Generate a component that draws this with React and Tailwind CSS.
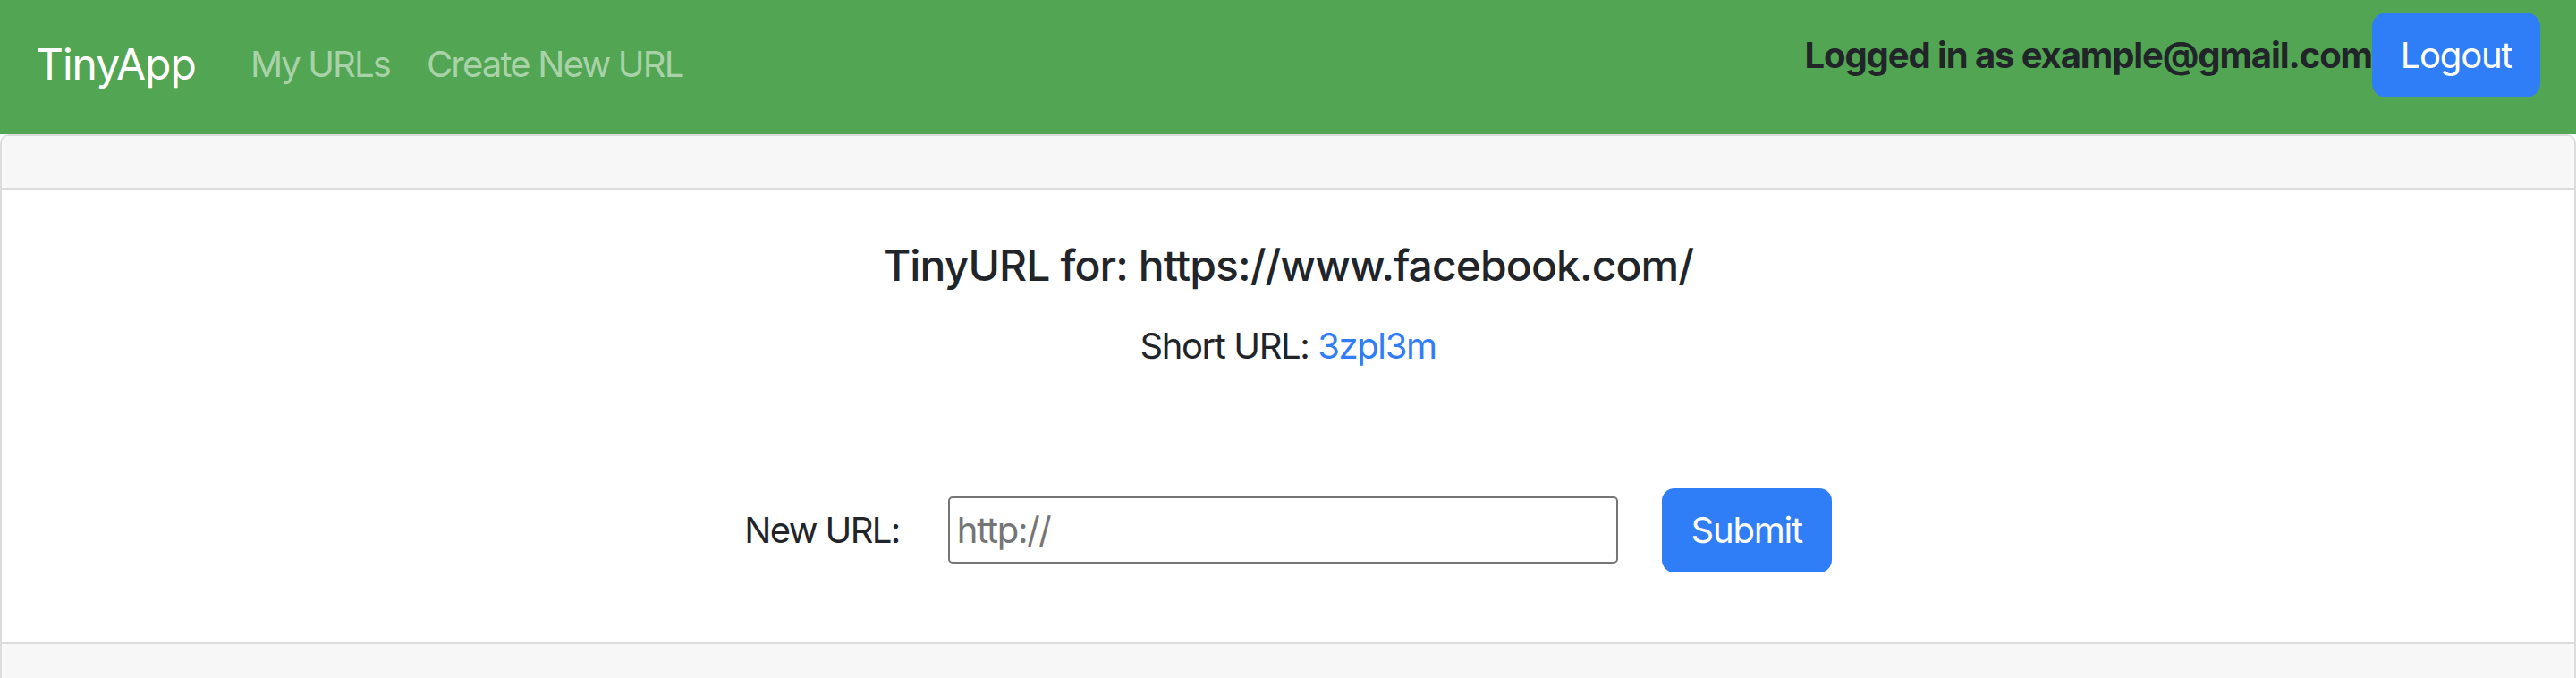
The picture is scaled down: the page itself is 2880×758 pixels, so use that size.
export default function App() {
  return (
    <div className="min-h-[758px] bg-white font-['Inter',sans-serif] text-[#212529]">
      {/* Navbar */}
      <nav className="flex h-[150px] justify-between bg-[#52a552] pl-[40px] pr-[40px]">
        <div className="flex items-center pb-[6px]">
          <a href="#" className="mr-[61px] text-[48px] tracking-[-1px] text-white">
            TinyApp
          </a>
          <a href="#" className="text-[40px] tracking-[-1.9px] text-[#a8d2a8]">
            My URLs
          </a>
          <a href="#" className="ml-[41px] text-[40px] tracking-[-1.8px] text-[#a8d2a8]">
            Create New URL
          </a>
        </div>
        <div className="mt-[14px] flex h-[95px] items-center">
          <span className="text-[40px] font-bold tracking-[-1.1px] text-[#212529]">
            Logged in as example@gmail.com
          </span>
          <button className="h-[95px] w-[188px] rounded-[16px] bg-[#307ef7] text-[40px] tracking-[-1.2px] text-white">
            Logout
          </button>
        </div>
      </nav>

      {/* Card */}
      <div className="rounded-t-[10px] border-x-2 border-t-2 border-[#dcdcdc]">
        <div className="h-[60px] rounded-t-[8px] border-b-2 border-[#dcdcdc] bg-[#f7f7f7]"></div>

        <div className="flex h-[506px] flex-col items-center bg-white pt-[56px]">
          <h5 className="text-[48px] font-medium leading-[1.2] tracking-[-0.9px]">
            TinyURL for: https://www.facebook.com/
          </h5>
          <p className="mt-[31px] text-[40px] tracking-[-1.4px]">
            Short URL: <a href="#" className="text-[#307ef7]">3zpl3m</a>
          </p>

          <form className="mt-[129px] flex h-[94px] items-center" onSubmit={(e) => e.preventDefault()}>
            <label className="mr-[54px] text-[40px] tracking-[-1.6px]">New URL:</label>
            <input
              type="text"
              placeholder="http://"
              className="h-[75px] w-[749px] rounded-[5px] border-2 border-[#767676] px-[8px] text-[40px] tracking-[-1.3px] placeholder:text-[#757575]"
            />
            <button className="ml-[49px] h-[94px] w-[190px] rounded-[14px] bg-[#307ef7] text-[40px] tracking-[-1.2px] text-white">
              Submit
            </button>
          </form>
        </div>

        <div className="h-[60px] border-t-2 border-[#dcdcdc] bg-[#f7f7f7]"></div>
      </div>
    </div>
  );
}
